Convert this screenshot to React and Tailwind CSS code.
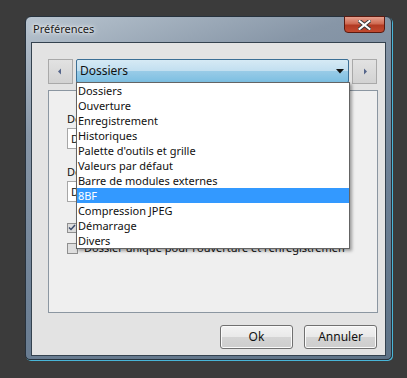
import React from 'react';

const items = [
  "Dossiers",
  "Ouverture",
  "Enregistrement",
  "Historiques",
  "Palette d'outils et grille",
  "Valeurs par défaut",
  "Barre de modules externes",
  "8BF",
  "Compression JPEG",
  "Démarrage",
  "Divers",
];

function ArrowButton({ dir }) {
  return (
    <div className="w-[25px] h-[25px] border border-[#a9a9a9] bg-gradient-to-b from-[#e2e2e2] to-[#d2d2d2] flex items-center justify-center">
      <svg width="6" height="7" viewBox="0 0 6 7">
        {dir === 'left'
          ? <path d="M4 0.5 L1 3.5 L4 6.5 Z" fill="#55658a" />
          : <path d="M2 0.5 L5 3.5 L2 6.5 Z" fill="#55658a" />}
      </svg>
    </div>
  );
}

function Button({ label }) {
  return (
    <div className="w-[73px] h-[24px] rounded-[3px] border border-[#707070] bg-[linear-gradient(#f3f3f3_0%,#e9e9e9_48%,#d4d4d4_52%,#cdcdcd_100%)] flex items-center justify-center text-[12px] text-[#111] shadow-[inset_0_0_0_1px_#fafafa]">
      {label}
    </div>
  );
}

export default function App() {
  return (
    <div className="relative w-[407px] h-[378px] bg-[#3b3b3b] pt-[16px] pl-[25px] font-['Noto_Sans',sans-serif] overflow-hidden">
      {/* window */}
      <div className="relative w-[367px] h-[344px] rounded-t-[6px] rounded-b-[5px] border border-[#27323d] bg-[linear-gradient(160deg,#b9c5d0_0%,#8796a7_25%,#6e8196_60%,#5d7286_100%)] shadow-[1px_1px_0_#49b6d8] flex flex-col px-[5px] pb-[3px]">
        <div className="h-[25px] flex items-center pl-[2px]">
          <span className="text-[11px] text-[#1a1a1a] [text-shadow:0_0_6px_#ffffff,0_0_3px_#ffffff]">Préférences</span>
        </div>
        {/* close */}
        <div className="absolute top-[-1px] right-[6px] w-[41px] h-[17px] rounded-b-[4px] border border-[#5a1a10] bg-[linear-gradient(#e6a08e_0%,#cf6a52_45%,#b23a22_55%,#c24a30_100%)] flex items-center justify-center">
          <svg width="13" height="10" viewBox="0 0 13 10">
            <path d="M1.5 1 L11.5 9 M11.5 1 L1.5 9" stroke="#3a3a3a" strokeWidth="4" strokeLinecap="square" />
            <path d="M1.5 1 L11.5 9 M11.5 1 L1.5 9" stroke="#ffffff" strokeWidth="2" strokeLinecap="square" />
          </svg>
        </div>
        {/* client */}
        <div className="flex-1 border border-[#34424f] bg-[#e3e3e3] flex flex-col pt-[16px] pl-[16px] pr-[8px]">
          <div className="relative flex gap-[3px] z-10">
            <ArrowButton dir="left" />
            <div className="relative w-[274px]">
              <div className="h-[24px] rounded-[2px] border border-[#3c6f95] bg-[linear-gradient(#d6eaf5_0%,#c2dff0_48%,#98cbe7_52%,#7dbfe2_100%)] flex items-center pl-[3px] pr-[4px] text-[12px] text-[#111]">
                <span className="flex-1">Dossiers</span>
                <svg width="8" height="5" viewBox="0 0 8 5"><path d="M0 0 L8 0 L4 4.5 Z" fill="#111" /></svg>
              </div>
              {/* dropdown list */}
              <div className="absolute left-0 top-[23px] w-[274px] border border-[#646464] bg-white py-0 shadow-[2px_2px_3px_rgba(0,0,0,0.35)]">
                {items.map((it) => (
                  <div
                    key={it}
                    className={
                      "h-[15px] leading-[15px] pl-[1px] text-[11px] " +
                      (it === "8BF" ? "bg-[#3399ff] text-white" : "text-[#111]")
                    }
                  >
                    {it}
                  </div>
                ))}
              </div>
            </div>
            <ArrowButton dir="right" />
          </div>

          {/* panel */}
          <div className="mt-[6px] w-[330px] h-[223px] border border-[#8b96a1] bg-[#efefef] pl-[18px] pt-[21px] text-[11px] text-[#111]">
            <div className="leading-[13px]">Dossier d'ouverture</div>
            <div className="mt-[3px] w-[260px] h-[21px] border border-[#a7a7a7] bg-white pl-[3px] leading-[19px]">D:\Images</div>
            <div className="mt-[16px] leading-[13px]">Dossier d'enregistrement</div>
            <div className="mt-[3px] w-[260px] h-[21px] border border-[#a7a7a7] bg-white pl-[3px] leading-[19px]">D:\Images</div>
            <div className="mt-[18px] h-[15px] flex items-center gap-[6px]">
              <div className="w-[10px] h-[10px] border border-[#8f8f8f] bg-[#dcdcdc] flex items-center justify-center">
                <svg width="8" height="7" viewBox="0 0 8 7"><path d="M1 3.5 L3 5.5 L7 1" stroke="#3a4a6a" strokeWidth="1.5" fill="none" /></svg>
              </div>
              <span>Mémoriser le dernier dossier utilisé</span>
            </div>
            <div className="mt-[6px] h-[15px] flex items-center gap-[6px]">
              <div className="w-[11px] h-[11px] border border-[#8f8f8f] bg-[#dedede]" />
              <span>Dossier unique pour l'ouverture et l'enregistremen</span>
            </div>
          </div>

          <div className="mt-[12px] flex justify-end gap-[11px]">
            <Button label="Ok" />
            <Button label="Annuler" />
          </div>
        </div>
      </div>

      {/* red annotation arrow */}
      <svg className="absolute left-[222px] top-[180px]" width="100" height="34" viewBox="0 0 100 34">
        <defs>
          <filter id="sh" x="-20%" y="-40%" width="140%" height="180%">
            <feGaussianBlur in="SourceAlpha" stdDeviation="1.5" />
            <feOffset dx="2" dy="3" result="o" />
            <feComponentTransfer><feFuncA type="linear" slope="0.6" /></feComponentTransfer>
            <feMerge><feMergeNode /><feMergeNode in="SourceGraphic" /></feMerge>
          </filter>
        </defs>
        <g filter="url(#sh)">
          <path d="M7 15 L27 6 L25 13 L91 13 L91 17 L25 17 L27 25 Z" fill="#ee1c1c" />
        </g>
      </svg>
    </div>
  );
}
